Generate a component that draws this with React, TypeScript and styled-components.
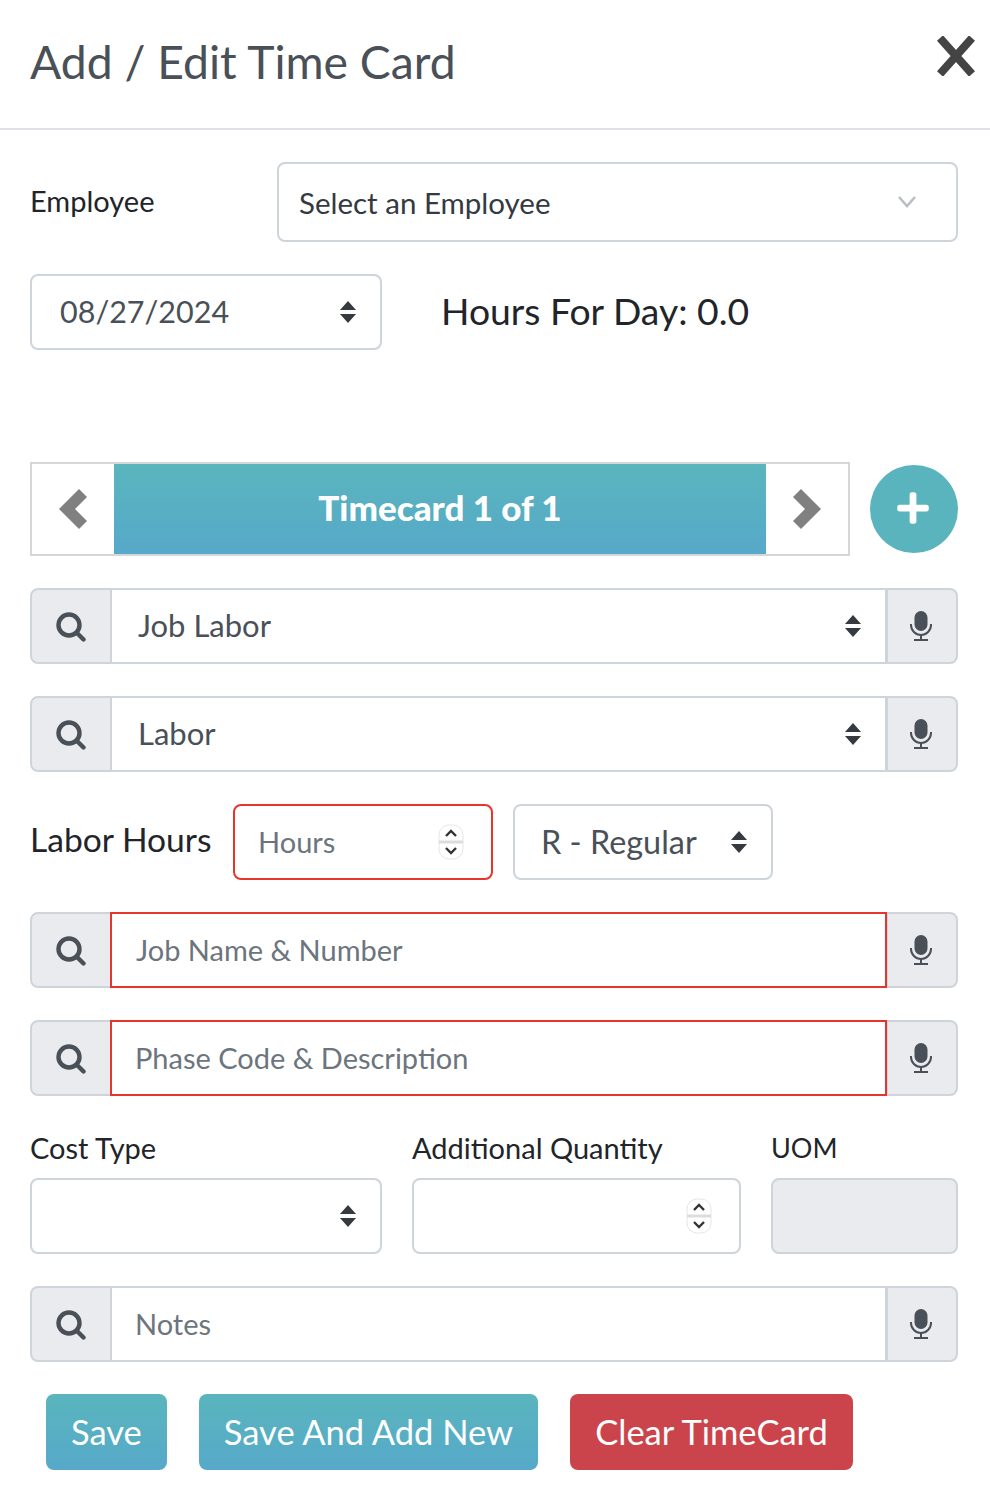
import React from 'react';
import styled, { createGlobalStyle } from 'styled-components';
import { FaPlus } from 'react-icons/fa';

const GlobalStyle = createGlobalStyle`
  html, body {
    margin: 0;
    padding: 0;
    background: #fff;
  }

  body {
    font-family: "Lato", "Open Sans", sans-serif;
    color: #212529;
  }

  * {
    box-sizing: border-box;
  }
`;

const BORDER = '#ced4da';
const ADDON = '#e9ebef';
const INVALID = '#e8352b';
const TEAL = 'linear-gradient(180deg, #5ab5bd 0%, #56a9c9 100%)';

const Page = styled.div`
  width: 990px;
  height: 1500px;
  overflow: hidden;
`;

const Header = styled.header`
  height: 130px;
  padding: 0 14px 6px 30px;
  display: flex;
  align-items: center;
  justify-content: space-between;
  border-bottom: 2px solid #dee2e6;
`;

const Title = styled.h1`
  margin: 0;
  font-size: 46.3px;
  font-weight: 400;
  color: #495057;
`;

const CloseButton = styled.button`
  width: 40px;
  height: 40px;
  padding: 0;
  border: 0;
  background: none;
  margin-bottom: 10px;
`;

const Body = styled.div`
  padding: 32px 32px 0 30px;
  display: flex;
  flex-direction: column;
  gap: 32px;
`;

const EmployeeRow = styled.div`
  display: flex;
  align-items: center;
`;

const EmployeeLabel = styled.label`
  width: 247px;
  font-size: 29px;
  padding-bottom: 4px;
`;

const EmployeeSelect = styled.div`
  flex: 1;
  height: 80px;
  padding: 0 39px 0 20px;
  display: flex;
  align-items: center;
  justify-content: space-between;
  border: 2px solid ${BORDER};
  border-radius: 8px;
  font-size: 29.5px;
  color: #343a40;
`;

const DateRow = styled.div`
  display: flex;
  align-items: center;
  margin-bottom: 80px;
`;

const HoursForDay = styled.div`
  margin-left: 59px;
  padding-bottom: 4px;
  font-size: 37.3px;
`;

const Field = styled.div<{ $width?: number; $inset?: number; $invalid?: boolean; $disabled?: boolean }>`
  width: ${props => (props.$width ? `${props.$width}px` : '100%')};
  height: 76px;
  flex-shrink: 0;
  display: flex;
  align-items: center;
  justify-content: space-between;
  padding: 0 23px 2px ${props => props.$inset ?? 26}px;
  border: 2px solid ${props => (props.$invalid ? INVALID : BORDER)};
  border-radius: 8px;
  background: ${props => (props.$disabled ? ADDON : '#fff')};
  font-size: 30.5px;
  color: #495057;
`;

const Placeholder = styled.span`
  font-size: 29px;
  color: #6c757d;
`;

const ShiftValue = styled.span`
  font-size: 32.4px;
`;

const PagerRow = styled.div`
  display: flex;
  align-items: center;
  justify-content: space-between;
`;

const Pager = styled.div`
  width: 820px;
  height: 94px;
  display: flex;
  border: 2px solid #d3d7da;
`;

const PagerArrow = styled.button`
  width: 82px;
  padding: 0;
  border: 0;
  background: #fff;
  display: flex;
  align-items: center;
  justify-content: center;
`;

const PagerTitle = styled.div`
  flex: 1;
  display: flex;
  align-items: center;
  justify-content: center;
  padding-bottom: 4px;
  background: ${TEAL};
  color: #fff;
  font-size: 35px;
  font-weight: 900;
`;

const AddButton = styled.button`
  width: 88px;
  height: 88px;
  padding: 0 2px 2px 0;
  border: 0;
  border-radius: 50%;
  background: #59b4bd;
  color: #fff;
  font-size: 36px;
  display: flex;
  align-items: center;
  justify-content: center;
`;

const Group = styled.div`
  height: 76px;
  display: flex;
`;

const Addon = styled.div<{ $side: 'left' | 'right' }>`
  width: ${props => (props.$side === 'left' ? 82 : 72)}px;
  flex-shrink: 0;
  display: flex;
  align-items: center;
  justify-content: center;
  background: ${ADDON};
  border: 2px solid ${BORDER};
  border-radius: ${props => (props.$side === 'left' ? '8px 0 0 8px' : '0 8px 8px 0')};
  padding-right: ${props => (props.$side === 'left' ? 0 : 2)}px;
`;

const GroupInput = styled.div<{ $invalid?: boolean; $inset: number }>`
  flex: 1;
  min-width: 0;
  display: flex;
  align-items: center;
  justify-content: space-between;
  padding: 0 23px 2px ${props => props.$inset}px;
  margin: 0 -1px 0 -2px;
  position: relative;
  border: 2px solid ${props => (props.$invalid ? INVALID : BORDER)};
  font-size: 31px;
  color: #495057;
  background: #fff;
`;

const HoursRow = styled.div`
  display: flex;
  align-items: center;
  gap: 20px;
`;

const HoursLabel = styled.label`
  width: 183px;
  font-size: 33.6px;
  white-space: nowrap;
  padding-bottom: 6px;
`;

const ColumnsRow = styled.div`
  display: flex;
  gap: 30px;
`;

const Column = styled.div<{ $width: number }>`
  width: ${props => props.$width}px;
  display: flex;
  flex-direction: column;
  gap: 12px;
`;

const ColumnLabel = styled.label<{ $size?: number }>`
  font-size: ${props => props.$size ?? 29}px;
  line-height: 36px;
  height: 36px;
  margin-top: 2px;
`;

const ButtonRow = styled.div`
  display: flex;
  gap: 32px;
  padding-left: 16px;
`;

const ActionButton = styled.button<{ $danger?: boolean }>`
  height: 76px;
  padding: 0 25px 2px;
  border: 0;
  border-radius: 8px;
  background: ${props => (props.$danger ? '#cc444b' : TEAL)};
  color: #fff;
  font-family: inherit;
  font-size: 34.5px;
  font-weight: 400;
`;

const CaretSvg = styled.svg`
  flex-shrink: 0;
  margin-top: 2px;
`;

const SpinnerSvg = styled.svg`
  flex-shrink: 0;
  margin: 2px 4px 0 0;
`;

const SearchSvg = styled.svg`
  margin-top: 2px;
`;

const CloseIcon = () => (
  <svg width="40" height="40" viewBox="0 0 40 40">
    <path d="M4 2 L36 38 M36 2 L4 38" stroke="#444" strokeWidth="8" fill="none" />
  </svg>
);

const ChevronDown = () => (
  <svg width="20" height="14" viewBox="0 0 20 14">
    <path d="M2 2 L10 11 L18 2" stroke="#b9bfc5" strokeWidth="2.6" fill="none" />
  </svg>
);

const UpDownCaret = () => (
  <CaretSvg width="18" height="22" viewBox="0 0 18 22">
    <path d="M9 0 L17 9 L1 9 Z M1 13 L17 13 L9 22 Z" fill="#343a40" />
  </CaretSvg>
);

const Spinner = () => (
  <SpinnerSvg width="26" height="36" viewBox="0 0 26 36">
    <rect x="1" y="1" width="24" height="34" rx="10" fill="#fff" stroke="#e6e6e6" strokeWidth="1" />
    <rect x="1" y="16.5" width="24" height="3" fill="#dcdcdc" />
    <path d="M8 12 L13 7 L18 12 M8 24 L13 29 L18 24" stroke="#333" strokeWidth="2.4" fill="none" />
  </SpinnerSvg>
);

const Chevron = ({ flip }: { flip?: boolean }) => (
  <svg width="30" height="40" viewBox="0 0 30 40">
    <path
      d={flip ? 'M1 8 L9 0 L29 20 L9 40 L1 32 L13 20 Z' : 'M29 8 L21 0 L1 20 L21 40 L29 32 L17 20 Z'}
      fill="#808080"
    />
  </svg>
);

const SearchIcon = () => (
  <SearchSvg width="30" height="30" viewBox="0 0 30 30">
    <circle cx="13" cy="13" r="10.5" stroke="#495057" strokeWidth="4.4" fill="none" />
    <path d="M21 21 L27.5 27.5" stroke="#495057" strokeWidth="4.4" strokeLinecap="round" fill="none" />
  </SearchSvg>
);

const MicIcon = () => (
  <svg width="22" height="30" viewBox="0 0 22 30">
    <rect x="4.5" y="0" width="13" height="20" rx="6.5" fill="#495057" />
    <path d="M1 13 V14 A10 10 0 0 0 21 14 V13" stroke="#495057" strokeWidth="2" fill="none" />
    <path d="M11 24 V29 M4 29 H18" stroke="#495057" strokeWidth="2" fill="none" />
  </svg>
);

const SearchGroup = ({
  children,
  invalid,
  inset,
}: {
  children: React.ReactNode;
  invalid?: boolean;
  inset: number;
}) => (
  <Group>
    <Addon $side="left">
      <SearchIcon />
    </Addon>
    <GroupInput $invalid={invalid} $inset={inset}>
      {children}
    </GroupInput>
    <Addon $side="right">
      <MicIcon />
    </Addon>
  </Group>
);

const App: React.FC = () => {
  return (
    <Page>
      <GlobalStyle />
      <Header>
        <Title>Add / Edit Time Card</Title>
        <CloseButton aria-label="Close">
          <CloseIcon />
        </CloseButton>
      </Header>
      <Body>
        <EmployeeRow>
          <EmployeeLabel>Employee</EmployeeLabel>
          <EmployeeSelect>
            Select an Employee
            <ChevronDown />
          </EmployeeSelect>
        </EmployeeRow>

        <DateRow>
          <Field $width={352} $inset={28}>
            08/27/2024
            <UpDownCaret />
          </Field>
          <HoursForDay>Hours For Day: 0.0</HoursForDay>
        </DateRow>

        <PagerRow>
          <Pager>
            <PagerArrow aria-label="Previous">
              <Chevron />
            </PagerArrow>
            <PagerTitle>Timecard 1 of 1</PagerTitle>
            <PagerArrow aria-label="Next">
              <Chevron flip />
            </PagerArrow>
          </Pager>
          <AddButton aria-label="Add">
            <FaPlus />
          </AddButton>
        </PagerRow>

        <SearchGroup inset={26}>
          Job Labor
          <UpDownCaret />
        </SearchGroup>
        <SearchGroup inset={26}>
          Labor
          <UpDownCaret />
        </SearchGroup>

        <HoursRow>
          <HoursLabel>Labor Hours</HoursLabel>
          <Field $width={260} $inset={23} $invalid>
            <Placeholder>Hours</Placeholder>
            <Spinner />
          </Field>
          <Field $width={260}>
            <ShiftValue>R - Regular</ShiftValue>
            <UpDownCaret />
          </Field>
        </HoursRow>

        <SearchGroup inset={24} invalid>
          <Placeholder>Job Name &amp; Number</Placeholder>
        </SearchGroup>
        <SearchGroup inset={23} invalid>
          <Placeholder>Phase Code &amp; Description</Placeholder>
        </SearchGroup>

        <ColumnsRow>
          <Column $width={352}>
            <ColumnLabel>Cost Type</ColumnLabel>
            <Field>
              <span />
              <UpDownCaret />
            </Field>
          </Column>
          <Column $width={329}>
            <ColumnLabel>Additional Quantity</ColumnLabel>
            <Field>
              <span />
              <Spinner />
            </Field>
          </Column>
          <Column $width={187}>
            <ColumnLabel $size={27}>UOM</ColumnLabel>
            <Field $disabled />
          </Column>
        </ColumnsRow>

        <SearchGroup inset={23}>
          <Placeholder>Notes</Placeholder>
        </SearchGroup>

        <ButtonRow>
          <ActionButton>Save</ActionButton>
          <ActionButton>Save And Add New</ActionButton>
          <ActionButton $danger>Clear TimeCard</ActionButton>
        </ButtonRow>
      </Body>
    </Page>
  );
};

export default App;
